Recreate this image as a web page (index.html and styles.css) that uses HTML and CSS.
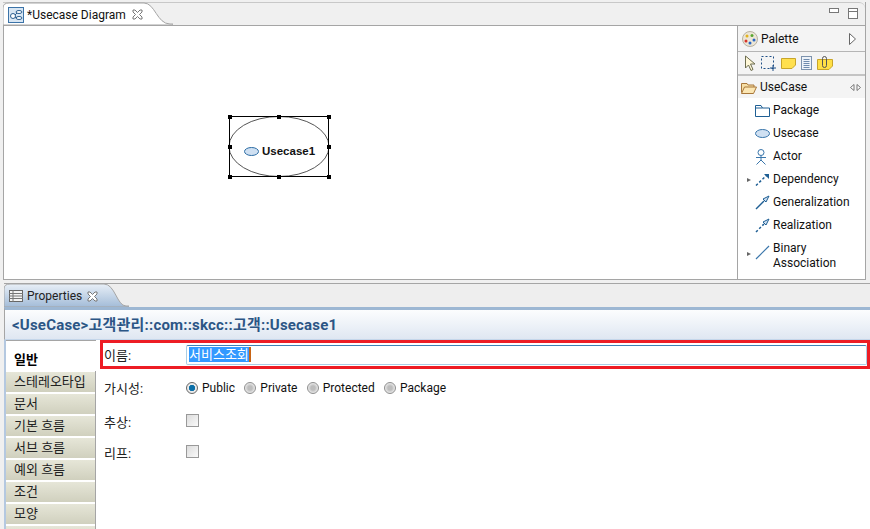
FILE: index.html

```html
<!DOCTYPE html>
<html lang="ko">
<head>
  <meta charset="UTF-8">
  <title>Usecase Diagram</title>
  <link rel="stylesheet" href="styles.css">
</head>
<body>
  <section class="editor">
    <div class="tabbar">
      <div class="tab">
        <svg class="tab-shape" width="170" height="23" viewBox="0 0 170 23"><path d="M0 23V6Q0 1 6 1H141C152 1 154 22 167 22H170V23Z" fill="#fff" stroke="#a5a5a5"/></svg>
        <svg class="ico tab-ico" width="16" height="16" viewBox="0 0 16 16"><rect x="0.500" y="0.500" width="15" height="15" fill="#d8e6f3" stroke="#3b73a8"/><circle cx="5" cy="9" r="2.500" fill="#fff" stroke="#2c5f8f"/><ellipse cx="11" cy="5" rx="3" ry="1.500" fill="#fff" stroke="#2c5f8f"/><ellipse cx="11" cy="11" rx="3" ry="1.500" fill="#fff" stroke="#2c5f8f"/><path d="M7 8l2-2M7 10l2 1" stroke="#2c5f8f"/></svg>
        <span class="tab-label">*Usecase Diagram</span>
        <svg class="ico close" width="11" height="11" viewBox="0 0 11 11"><path d="M1 1h2l2.500 2.500L8 1h2v2L7.500 5.500 10 8v2H8L5.500 7.500 3 10H1V8l2.500-2.500L1 3Z" fill="#fff" stroke="#777"/></svg>
      </div>
      <div class="win-btns">
        <svg width="10" height="5" viewBox="0 0 10 5"><rect x="0.500" y="0.500" width="9" height="4" fill="#fff" stroke="#777"/></svg>
        <svg width="10" height="11" viewBox="0 0 10 11"><rect x="0.500" y="0.500" width="9" height="10" fill="#fff" stroke="#777"/><path d="M0 3.500h10" stroke="#777"/></svg>
      </div>
    </div>
    <div class="editor-body">
      <div class="canvas">
        <div class="node">
          <svg class="node-shape" width="104" height="65" viewBox="0 0 104 65">
            <ellipse cx="52" cy="32.500" rx="50" ry="30" fill="#fff" stroke="#555"/>
            <rect x="2.500" y="2.500" width="99" height="60" fill="none" stroke="#000"/>
            <g fill="#000">
              <rect x="1" y="1" width="4" height="4"/><rect x="50" y="1" width="4" height="4"/><rect x="100" y="1" width="4" height="4"/>
              <rect x="1" y="31" width="4" height="4"/><rect x="100" y="31" width="4" height="4"/>
              <rect x="1" y="61" width="4" height="4"/><rect x="50" y="61" width="4" height="4"/><rect x="100" y="61" width="4" height="4"/>
            </g>
          </svg>
          <div class="node-label">
            <svg width="15" height="9" viewBox="0 0 15 9"><ellipse cx="7.500" cy="4.500" rx="7" ry="4" fill="#cfe0f2" stroke="#2f6ea5"/></svg>
            <span>Usecase1</span>
          </div>
        </div>
      </div>
      <aside class="palette">
        <div class="pal-head">
          <svg width="16" height="16" viewBox="0 0 16 16"><circle cx="8" cy="8" r="7.500" fill="#ece6d6" stroke="#b8b0a0"/><circle cx="5" cy="5" r="1.500" fill="#e3b21c"/><circle cx="10" cy="4.500" r="1.500" fill="#58a632"/><circle cx="4" cy="10" r="1.500" fill="#d8332a"/><circle cx="8" cy="12" r="1.500" fill="#2b66c4"/><circle cx="12" cy="9" r="1.500" fill="#2b66c4"/></svg>
          <span>Palette</span>
          <svg class="pal-arrow" width="7" height="12" viewBox="0 0 7 12"><path d="M0.500 0.500L6.500 6 0.500 11.500Z" fill="#fff" stroke="#666"/></svg>
        </div>
        <div class="pal-tools">
          <svg width="11" height="17" viewBox="0 0 11 17"><path d="M0.500 1v12l3-3 2.500 5.500 2-1L5.500 9H10Z" fill="#fff8d8" stroke="#6d6d50"/></svg>
          <svg width="15" height="15" viewBox="0 0 15 15"><rect x="0.500" y="0.500" width="12" height="12" fill="none" stroke="#1f4f86" stroke-dasharray="2 2"/><path d="M12 9v6M9 12h6" stroke="#1f4f86"/></svg>
          <svg width="15" height="12" viewBox="0 0 15 12"><path d="M0.500 1.500H14.500V8L11 11.500H0.500Z" fill="#ffe04f" stroke="#c8a52a"/></svg>
          <svg width="11" height="14" viewBox="0 0 11 14"><rect x="0.500" y="0.500" width="10" height="13" fill="#eef3f9" stroke="#7d93ad"/><path d="M2.500 3.500h6M2.500 5.500h6M2.500 7.500h6M2.500 9.500h6M2.500 11.500h6" stroke="#6f8bad"/></svg>
          <svg width="16" height="15" viewBox="0 0 16 15"><path d="M0.500 3.500H15.500V10L12 13.500H0.500Z" fill="#ffdf45" stroke="#c8a52a"/><rect x="5.500" y="0.500" width="4" height="11" rx="2" fill="none" stroke="#555"/></svg>
        </div>
        <div class="drawer">
          <svg width="16" height="13" viewBox="0 0 16 13"><path d="M0.500 11.500V2.500H6L7 4H13V6" fill="#f6dfa6" stroke="#a8773a"/><path d="M0.500 12.500L3.500 6H15.500L12.500 12.500Z" fill="#fbe6b3" stroke="#a8773a"/></svg>
          <span>UseCase</span>
          <svg class="drawer-pin" width="11" height="7" viewBox="0 0 11 7"><path d="M4 0.500L0.500 3.500 4 6.500V0.500ZM7 0.500L10.500 3.500 7 6.500V0.500Z" fill="#fff" stroke="#777"/></svg>
        </div>
        <ul class="entries">
          <li class="entry">
            <svg width="15" height="12" viewBox="0 0 15 12"><path d="M0.500 11.500V0.500H6L7.500 3H14.500V11.500ZM0.500 3H7.500" fill="#fff" stroke="#1f5f94"/></svg>
            <span>Package</span>
          </li>
          <li class="entry">
            <svg width="15" height="9" viewBox="0 0 15 9"><ellipse cx="7.500" cy="4.500" rx="7" ry="4" fill="#cfe0f2" stroke="#3a76ab"/></svg>
            <span>Usecase</span>
          </li>
          <li class="entry">
            <svg width="12" height="16" viewBox="0 0 12 16"><circle cx="6" cy="3.500" r="3" fill="#fff" stroke="#3a76ab"/><path d="M6 6.500V11M1 8.500H11M6 11L1.500 15.500M6 11l4.500 4.500" fill="none" stroke="#3a76ab"/></svg>
            <span>Actor</span>
          </li>
          <li class="entry expandable">
            <svg width="15" height="13" viewBox="0 0 15 13"><path d="M1 12.500L12 2" stroke="#1f5f94" stroke-width="1.500" stroke-dasharray="2.500 2"/><path d="M9 1H14V6Z" fill="#1f5f94"/></svg>
            <span>Dependency</span>
          </li>
          <li class="entry">
            <svg width="15" height="15" viewBox="0 0 15 15"><path d="M1 14L9 6" stroke="#1f5f94" stroke-width="1.500"/><path d="M8 4L14 1 11 7Z" fill="#cfe0f2" stroke="#1f5f94"/></svg>
            <span>Generalization</span>
          </li>
          <li class="entry">
            <svg width="15" height="15" viewBox="0 0 15 15"><path d="M1 14L9 6" stroke="#1f5f94" stroke-width="1.500" stroke-dasharray="2.500 2"/><path d="M8 4L14 1 11 7Z" fill="#cfe0f2" stroke="#1f5f94"/></svg>
            <span>Realization</span>
          </li>
          <li class="entry expandable tall">
            <svg class="assoc" width="15" height="15" viewBox="0 0 15 15"><path d="M1 14L14 1" stroke="#3a76ab" stroke-width="1.200"/></svg>
            <span>Binary<br>Association</span>
          </li>
        </ul>
      </aside>
    </div>
  </section>

  <section class="props">
    <div class="props-tabbar">
      <div class="props-tab">
        <svg class="tab-shape" width="125" height="24" viewBox="0 0 125 24"><defs><linearGradient id="tabfill" x1="0" y1="0" x2="0" y2="1"><stop offset="0" stop-color="#e8eff7"/><stop offset="1" stop-color="#a3bcd8"/></linearGradient></defs><path d="M0 24V6Q0 1 6 1H100C111 1 113 23 122 23H125V24Z" fill="url(#tabfill)" stroke="#a5a5a5"/></svg>
        <svg class="ico tab-ico" width="14" height="12" viewBox="0 0 14 12"><rect x="0.500" y="0.500" width="13" height="11" fill="#f4f4f4" stroke="#666"/><path d="M0 3.500h14M0 6h14M0 8.500h14M4 0v12" stroke="#777"/></svg>
        <span class="props-label">Properties</span>
        <svg class="ico close" width="11" height="11" viewBox="0 0 11 11"><path d="M1 1h2l2.500 2.500L8 1h2v2L7.500 5.500 10 8v2H8L5.500 7.500 3 10H1V8l2.500-2.500L1 3Z" fill="#fff" stroke="#777"/></svg>
      </div>
    </div>
    <h2 class="props-title">&lt;UseCase&gt;고객관리::com::skcc::고객::Usecase1</h2>
    <div class="props-body">
      <nav class="side-tabs">
        <div class="side-tab active">일반</div>
        <div class="side-tab">스테레오타입</div>
        <div class="side-tab">문서</div>
        <div class="side-tab">기본 흐름</div>
        <div class="side-tab">서브 흐름</div>
        <div class="side-tab">예외 흐름</div>
        <div class="side-tab">조건</div>
        <div class="side-tab">모양</div>
        <div class="side-tab"></div>
      </nav>
      <div class="form">
        <div class="row name-row">
          <span class="field-label">이름:</span>
          <div class="name-input"><span class="selected">서비스조회</span></div>
        </div>
        <div class="row vis-row">
          <span class="field-label">가시성:</span>
          <label class="radio"><i class="radio-dot on"></i>Public</label>
          <label class="radio"><i class="radio-dot"></i>Private</label>
          <label class="radio"><i class="radio-dot"></i>Protected</label>
          <label class="radio"><i class="radio-dot"></i>Package</label>
        </div>
        <div class="row check-row">
          <span class="field-label">추상:</span>
          <i class="check"></i>
        </div>
        <div class="row check-row">
          <span class="field-label">리프:</span>
          <i class="check"></i>
        </div>
      </div>
    </div>
  </section>
</body>
</html>
```

FILE: styles.css

```css
* {
  box-sizing: border-box;
}
html, body {
  height: 100%;
}
body {
  margin: 0;
  overflow: hidden;
  background: #f0f0f0;
  color: #111;
  font-family: Roboto, "Noto Sans CJK KR", sans-serif;
  font-size: 12px;
}
svg {
  display: block;
  flex: none;
}
ul {
  margin: 0;
  padding: 0;
  list-style: none;
}

/* editor */
.editor {
  margin: 2px 4px 0 3px;
  height: 278px;
  display: flex;
  flex-direction: column;
  border-right: 1px solid #a5a5a5;
  border-bottom: 1px solid #a5a5a5;
}
.tabbar {
  height: 24px;
  flex: none;
  display: flex;
  justify-content: space-between;
  background: #f0f0f0;
  border-bottom: 1px solid #a5a5a5;
  border-top: 1px solid #c8c8c8;
  border-top-right-radius: 6px;
}
.tab {
  position: relative;
  width: 170px;
  height: 23px;
  margin-top: -1px;
  display: flex;
  align-items: center;
  padding: 2px 0 0 5px;
}
.tab-shape {
  position: absolute;
  left: 0;
  top: 0;
}
.ico {
  position: relative;
}
.tab-label {
  position: relative;
  margin-left: 3px;
}
.close {
  margin-left: 6px;
}
.win-btns {
  display: flex;
  gap: 9px;
  padding: 5px 7px 0 0;
}
.editor-body {
  flex: 1;
  display: flex;
  min-height: 0;
  background: #fff;
  border-left: 1px solid #a5a5a5;
}
.canvas {
  flex: 1;
  position: relative;
}
.node {
  position: absolute;
  left: 223px;
  top: 88px;
  width: 104px;
  height: 65px;
}
.node-shape {
  position: absolute;
  left: 0;
  top: 0;
}
.node-label {
  position: absolute;
  left: 17px;
  top: 30px;
  display: flex;
  align-items: center;
  gap: 3px;
  font-family: "Liberation Sans", sans-serif;
  font-weight: bold;
  font-size: 11.500px;
  line-height: 15px;
}

/* palette */
.palette {
  width: 128px;
  border-left: 1px solid #a5a5a5;
  display: flex;
  flex-direction: column;
}
.pal-head {
  height: 26px;
  display: flex;
  align-items: center;
  gap: 3px;
  padding-left: 4px;
  background: #f4f4f4;
  border-bottom: 1px solid #b5b5b5;
}
.pal-arrow {
  margin-left: auto;
  margin-right: 9px;
}
.pal-tools {
  height: 24px;
  display: flex;
  align-items: center;
  gap: 5px;
  padding-left: 7px;
  background: #f4f4f4;
  border-bottom: 2px solid #c4c4c4;
}
.drawer {
  height: 22px;
  display: flex;
  align-items: center;
  gap: 3px;
  padding-left: 3px;
  background: #f4f4f4;
}
.drawer-pin {
  margin-left: auto;
  margin-right: 4px;
}
.entries {
  padding-top: 1px;
}
.entry {
  position: relative;
  height: 23px;
  display: flex;
  align-items: center;
  padding-left: 17px;
  line-height: 15px;
}
.entry svg {
  margin-right: 3px;
}
.entry .assoc {
  margin-top: -8px;
}
.entry span {
  position: absolute;
  left: 35px;
}
.entry.tall {
  height: 38px;
}
.expandable::before {
  content: "";
  position: absolute;
  left: 9px;
  top: 10px;
  border-left: 4px solid #666;
  border-top: 2.500px solid transparent;
  border-bottom: 2.500px solid transparent;
}
.entry.tall::before {
  top: 15px;
}

/* properties */
.props {
  margin: 3px 0 0 4px;
}
.props-tabbar {
  height: 24px;
  background: #eeeeee;
  border-top: 1px solid #a5a5a5;
}
.props-tab {
  position: relative;
  width: 125px;
  height: 24px;
  margin-top: -1px;
  display: flex;
  align-items: center;
  padding: 2px 0 0 5px;
}
.props-label {
  position: relative;
  margin-left: 4px;
  color: #222;
}
.props-tab .close {
  margin-left: 5px;
}
.props-title {
  margin: 0;
  height: 33px;
  padding: 6px 0 0 7px;
  font-size: 15px;
  line-height: 18px;
  letter-spacing: 0.200px;
  font-weight: bold;
  color: #2b5585;
  background: linear-gradient(#fcfdfe, #dfe7f2);
  border-top: 3px solid #9db7d3;
  border-left: 1px solid #a5a5a5;
  border-bottom: 1px solid #c4d6ea;
}
.props-body {
  display: flex;
  height: 190px;
  background: #fff;
  border-left: 2px solid #b4c8e0;
}
.side-tabs {
  width: 90px;
  flex: none;
  border-right: 1px solid #a5a5a5;
  font-size: 13px;
}
.side-tab {
  height: 22px;
  padding-left: 8px;
  line-height: 20px;
  background: linear-gradient(#e6e6d8, #d0d0be);
  border-top: 1px solid #fff;
  border-bottom: 1px solid #fff;
  color: #222;
}
.side-tab.active {
  height: 31px;
  margin-right: -1px;
  padding-top: 9px;
  background: #fff;
  border-top-color: #a5a5a5;
  font-weight: bold;
  color: #000;
}

/* form */
.form {
  flex: 1;
  padding-left: 4px;
}
.row {
  display: flex;
  align-items: center;
  padding-left: 4px;
}
.field-label {
  width: 82px;
  flex: none;
  color: #222;
  font-size: 13px;
}
.name-row {
  height: 29px;
  border: 3px solid #ed1c24;
  padding-left: 1px;
}
.name-input {
  flex: 1;
  height: 20px;
  padding-left: 2px;
  border: 1px solid #a9cde4;
  border-top-color: #3f80b4;
  border-radius: 2px;
  display: flex;
  align-items: center;
  font-size: 13px;
}
.selected {
  background: #3399ff;
  color: #fff;
  line-height: 15px;
  border-right: 2px solid #c86414;
}
.vis-row {
  height: 30px;
  margin: 3px 0;
}
.radio {
  display: flex;
  align-items: center;
  gap: 4px;
  margin-right: 9.300px;
  padding-top: 1px;
}
.radio-dot {
  width: 12px;
  height: 12px;
  border-radius: 50%;
  border: 1px solid #8e8e8e;
  background: radial-gradient(circle, #bdbdbd 30%, #f4f4f4 80%);
}
.radio-dot.on {
  border-color: #666;
  background: radial-gradient(circle, #0b6fa8 40%, #eaeaea 50%);
}
.check-row {
  height: 31px;
}
.check-row .field-label {
  padding-top: 2px;
}
.check {
  width: 13px;
  height: 13px;
  border: 1px solid #999;
  background: linear-gradient(135deg, #dcdcdc, #fafafa);
}
```
